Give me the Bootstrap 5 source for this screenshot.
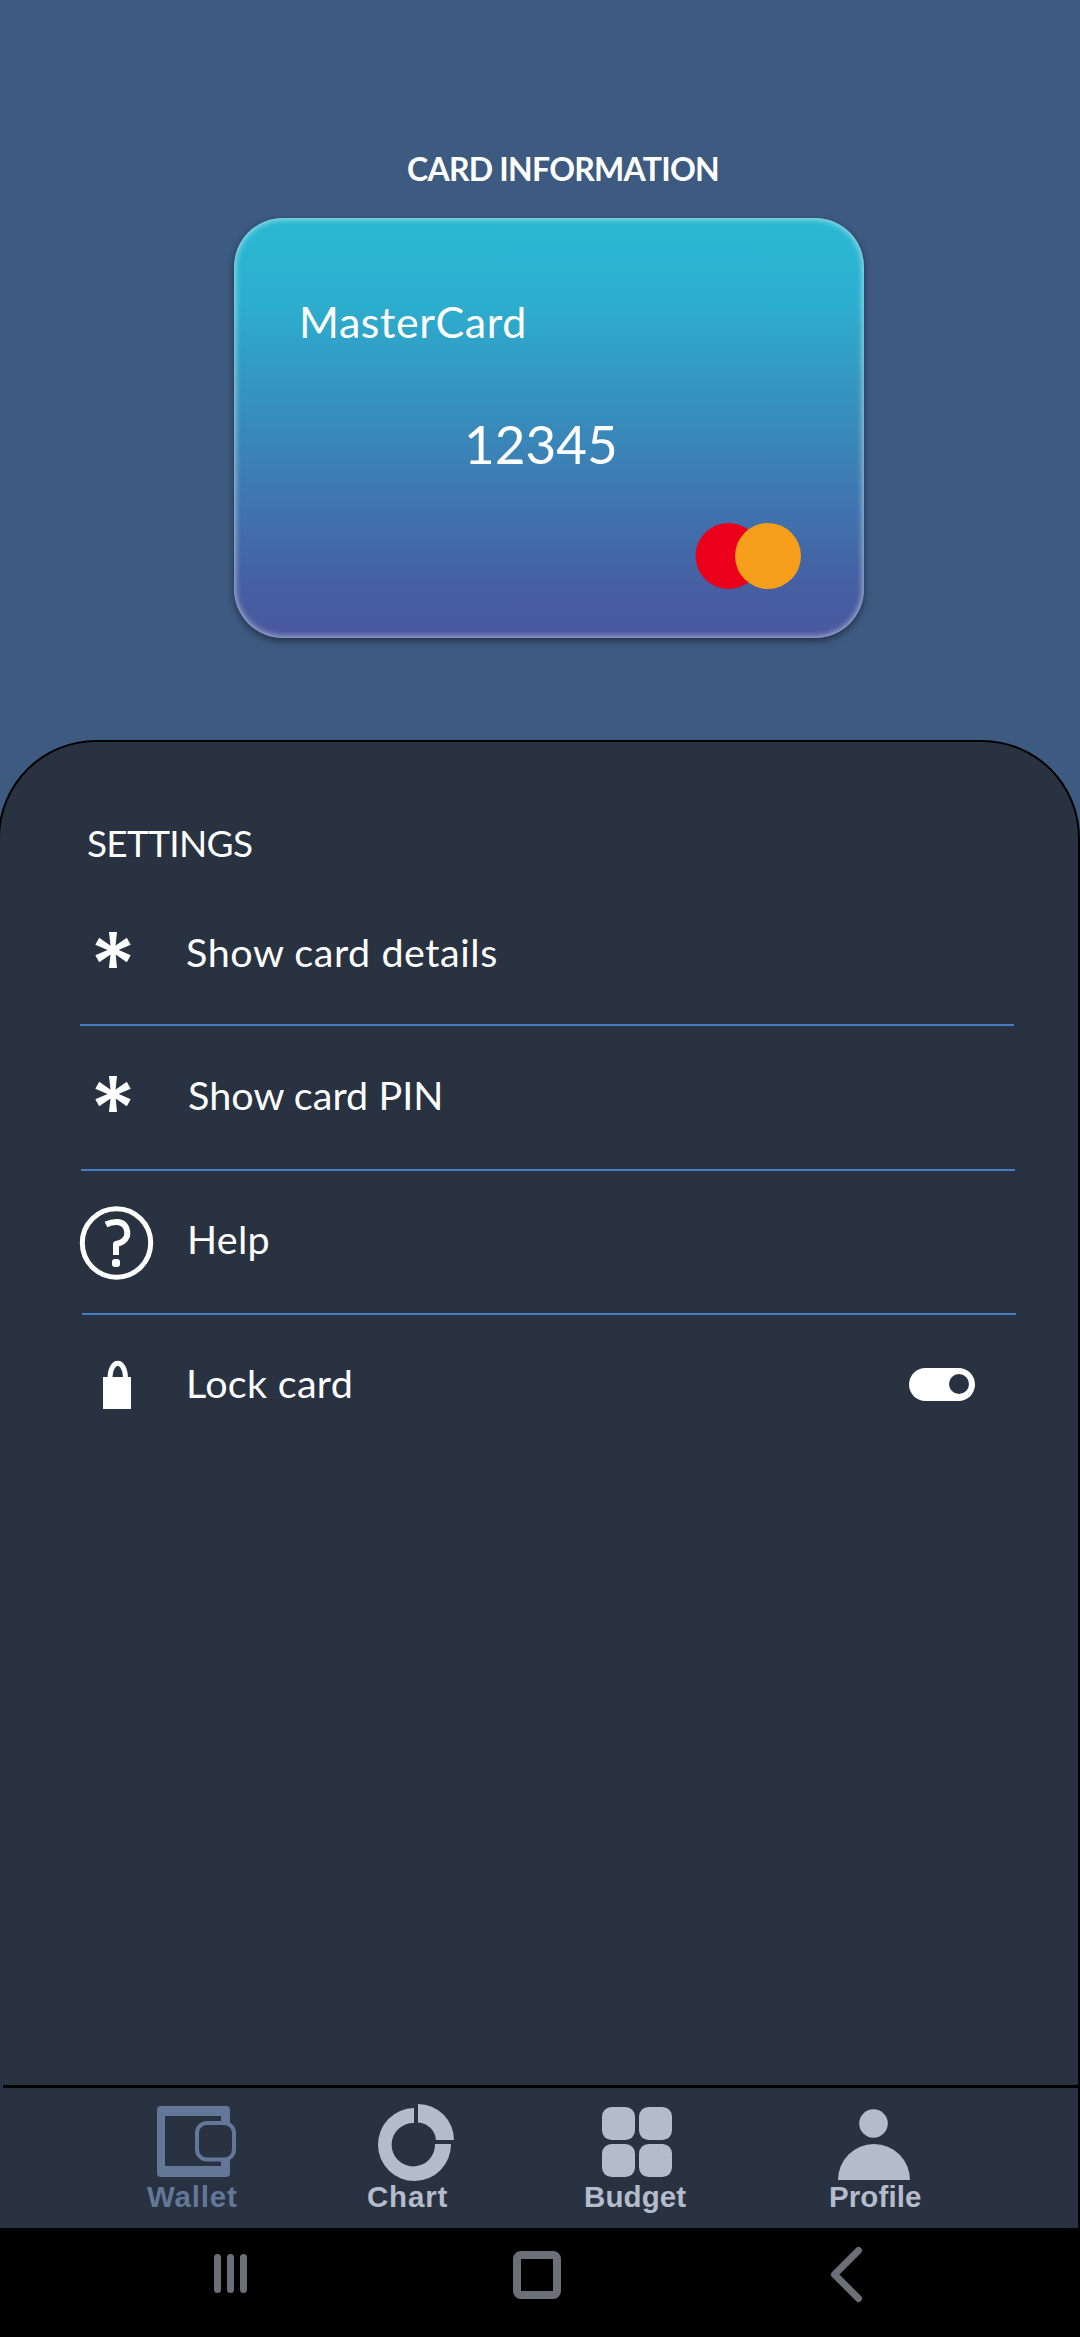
<!DOCTYPE html>
<html lang="en">
<head>
<meta charset="utf-8">
<meta name="viewport" content="width=device-width, initial-scale=1">
<title>Card information</title>
<link href="https://cdn.jsdelivr.net/npm/bootstrap@5.3.0/dist/css/bootstrap.min.css" rel="stylesheet">
<style>
body{width:1080px;height:2337px;background:#3d5a80;font-family:Lato,"Open Sans",sans-serif;color:#fff;overflow:hidden}
svg{display:block;flex:none}
.hero{height:740px;padding:145px 0 0 234px}
.hero-title{font-size:32px;line-height:47px;height:73px;font-weight:700;padding-left:173px;letter-spacing:-.75px;white-space:nowrap}
.pay-card{width:630px;height:420px;border-radius:49px;background:linear-gradient(#2ab8d2 0%,#2cafce 20%,#3399c2 37%,#3f75af 68%,#4560a2 87%,#4a589f 100%);box-shadow:inset 0 0 6px 1px rgba(255,255,255,.6),0 3px 7px rgba(0,0,0,.45);padding:79px 62px 0 65px}
.brand{font-size:43px;line-height:50px;letter-spacing:.6px}
.digits{font-size:53px;line-height:64px;margin-top:65px;padding-left:165px}
.brand-logo{margin:46px 0 0 auto}
.sheet{width:1082px;height:1488px;margin-left:-2px;background:#293241;border:2px solid #000;border-bottom:0;border-radius:98px 98px 0 0}
.heading{font-size:37px;line-height:44px;height:140px;padding:79px 0 0 87px;letter-spacing:-.7px}
.option{width:934px;height:144px;margin-left:80px;border-bottom:2px solid #457bc3}
.option span{font-size:39.5px;line-height:46px;padding-bottom:6px;white-space:nowrap;letter-spacing:.3px}
.option:nth-of-type(2) span{padding-bottom:3px;letter-spacing:.55px}
.option:nth-of-type(3){margin-left:81px;height:145px}
.option:nth-of-type(3) span{letter-spacing:.05px}
.option:nth-of-type(4){margin-left:82px}
.option:nth-of-type(5){margin-left:80px;height:142px;border:0}
.tabs{height:143px;margin-left:3px;border-top:3px solid #000;font:700 29.5px/28px "Liberation Sans",Arial,sans-serif;color:#b4bccb}
.tabs a{color:inherit;text-decoration:none;white-space:nowrap;letter-spacing:.1px}
.tabs .current{color:#637899}
.tabs .current,.tabs .wide{letter-spacing:.8px}
.system{height:109px;background:#000}
</style>
<script src="https://cdn.jsdelivr.net/npm/bootstrap@5.3.0/dist/js/bootstrap.bundle.min.js"></script>
</head>
<body>
<header class="hero">
  <div class="hero-title">CARD INFORMATION</div>
  <section class="pay-card">
    <div class="brand">MasterCard</div>
    <div class="digits">12345</div>
    <svg class="brand-logo" width="107" height="68" viewBox="695 522 107 68"><circle cx="728.5" cy="556" r="33" fill="#eb001b"/><circle cx="768" cy="556" r="33" fill="#f79e1b"/></svg>
  </section>
</header>
<main class="sheet d-flex flex-column">
  <div class="heading">SETTINGS</div>
  <div class="option d-flex align-items-center"><svg width="106" height="142" viewBox="80 882 106 142"><g fill="#fff" transform="translate(113 950)"><path id="arm" d="M-2.200-1-4-18H4L2.200-1 4 18H-4L-2.200 1Z"/><use href="#arm" transform="rotate(61)"/><use href="#arm" transform="rotate(-61)"/></g></svg><span>Show card details</span></div>
  <div class="option d-flex align-items-center"><svg width="107" height="143" viewBox="81 1026 107 143"><g fill="#fff" transform="translate(113 1094)"><use href="#arm"/><use href="#arm" transform="rotate(61)"/><use href="#arm" transform="rotate(-61)"/></g></svg><span>Show card PIN</span></div>
  <div class="option d-flex align-items-center"><svg width="105" height="142" viewBox="82 1171 105 142" overflow="visible"><circle cx="116.5" cy="1243" r="34.2" fill="none" stroke="#fff" stroke-width="5"/><path d="M106 1224.500Q112 1221.500 118 1222C126 1223 128 1230 127 1236Q124.500 1242.500 116 1244V1255" fill="none" stroke="#fff" stroke-width="6" stroke-linejoin="round"/><rect x="112" y="1259" width="8" height="8" rx="3" fill="#fff"/></svg><span>Help</span></div>
  <div class="option d-flex align-items-center"><svg width="106" height="142" viewBox="80 1315 106 142"><path d="M103 1377h28v32h-28z" fill="#fff"/><path d="M110 1379C110 1358 125.500 1358 125.500 1379" fill="none" stroke="#fff" stroke-width="5"/></svg><span>Lock card</span><svg class="ms-auto me-4" width="81" height="142" viewBox="909 1315 81 142"><rect x="909" y="1368" width="66" height="33" rx="16.500" fill="#fff"/><circle cx="959" cy="1384" r="10" fill="#293241"/></svg></div>
  <nav class="tabs mt-auto d-flex">
    <a href="#" class="current" style="margin-left:144px;width:220px"><svg width="95" height="95" viewBox="147 2088 95 95"><path fill="#637899" fill-rule="evenodd" d="M161 2106h65a4 4 0 0 1 4 4v63a4 4 0 0 1-4 4h-65a4 4 0 0 1-4-4v-63a4 4 0 0 1 4-4ZM165 2116v50h56v-50Z"/><rect x="197" y="2123" width="37" height="36.500" rx="10" fill="#293241" stroke="#637899" stroke-width="4"/></svg>Wallet</a>
    <a href="#" class="wide" style="width:217px"><svg width="95" height="95" viewBox="367 2088 95 95"><path fill="#b4bccb" d="M414 2108A36.500 36.500 0 1 0 451 2144H435A21.700 21.700 0 1 1 414 2123ZM418 2104A36 36 0 0 1 454 2140H436A19 19 0 0 0 418 2122.500Z"/></svg>Chart</a>
    <a href="#" style="width:245px"><svg width="105" height="95" viewBox="584 2088 105 95"><g fill="#b4bccb"><rect x="602" y="2107" width="33" height="33" rx="9.500"/><rect x="639" y="2107" width="33" height="33" rx="9.500"/><rect x="602" y="2144" width="33" height="33" rx="9.500"/><rect x="639" y="2144" width="33" height="33" rx="9.500"/></g></svg>Budget</a>
    <a href="#"><svg width="95" height="95" viewBox="829 2088 95 95"><circle cx="873.500" cy="2123.500" r="14.300" fill="#b4bccb"/><path d="M838 2180a36 36 0 0 1 72 0Z" fill="#b4bccb"/></svg>Profile</a>
  </nav>
</main>
<footer class="system"><svg width="1080" height="109" viewBox="0 2228 1080 109" fill="none" stroke="#6b7078" stroke-linecap="round"><path stroke-width="7" d="M217.500 2257.500v32M230.500 2257.500v32M243.500 2257.500v32"/><rect x="517" y="2255" width="40" height="40" rx="4" stroke-width="8"/><path stroke-width="7" stroke-linejoin="round" d="M858.500 2250.500 834.500 2274.500 858.500 2298.500"/></svg></footer>
</body>
</html>
